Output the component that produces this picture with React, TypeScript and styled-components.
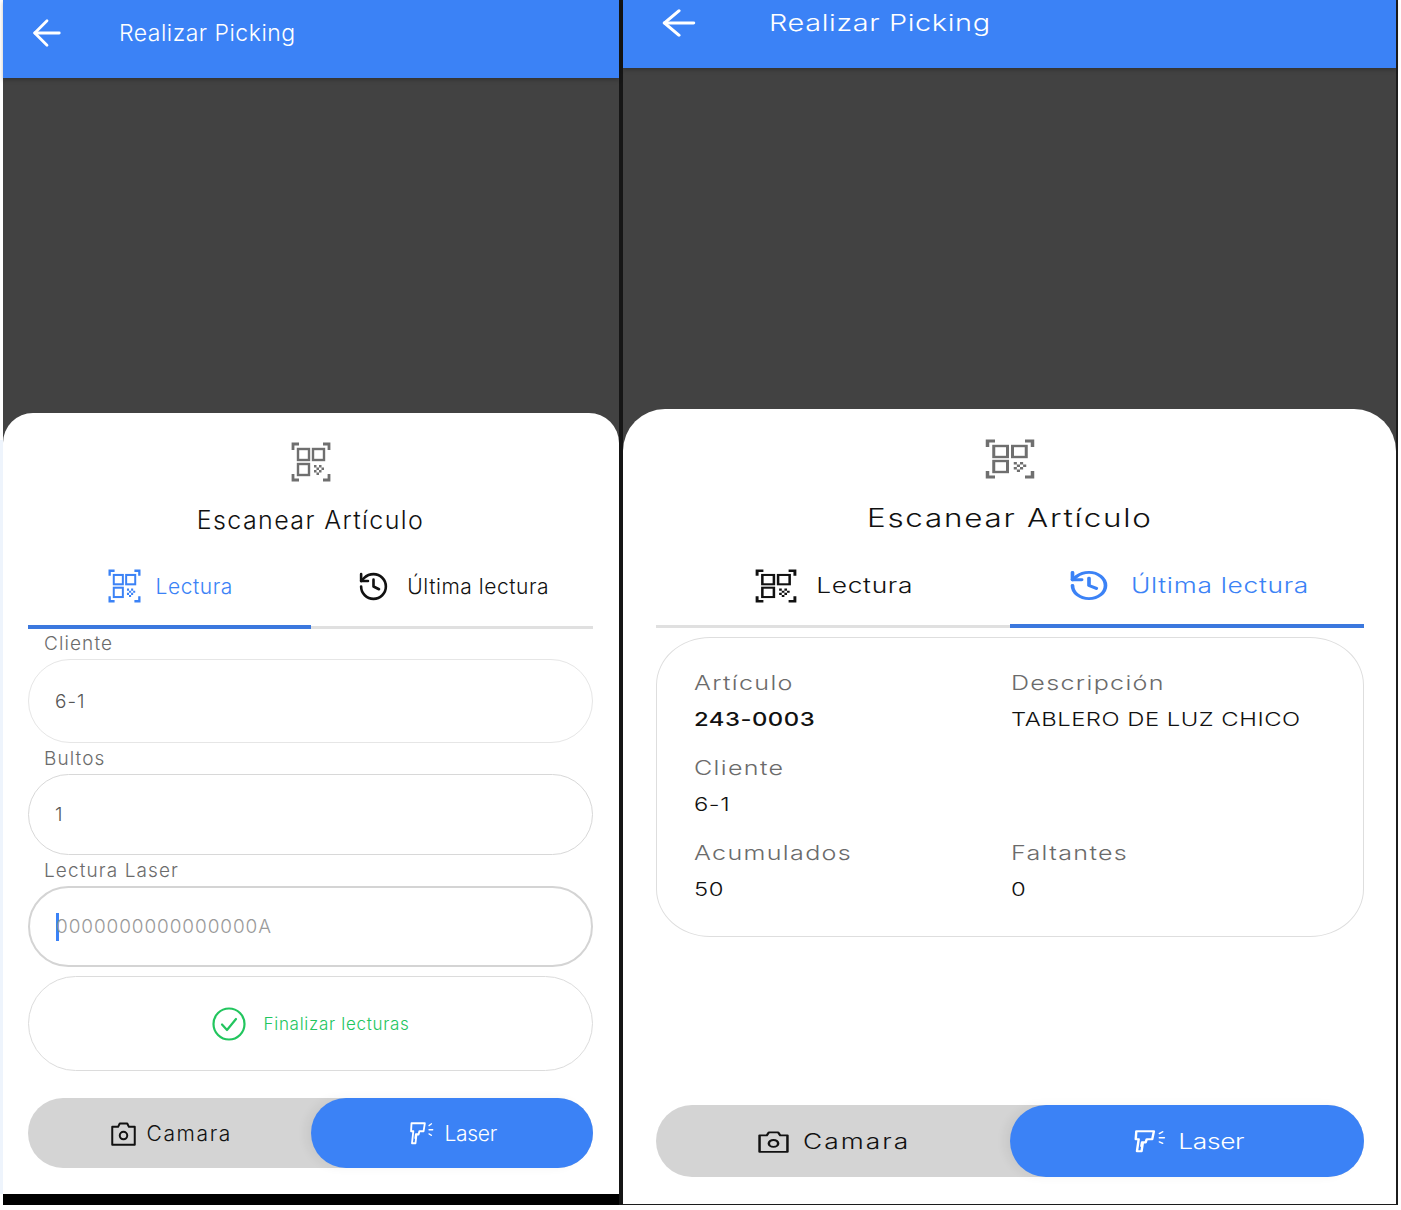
import React from "react";
import styled, { createGlobalStyle, css } from "styled-components";
import { ArrowLeft, History } from "lucide-react";

const Global = createGlobalStyle`
  html, body { margin: 0; padding: 0; background: #fff; }
  body { font-family: "Inter", "Liberation Sans", sans-serif; }
`;

const STRETCH = 1.255;
const stretched = (origin: string) => css`
  display: inline-block;
  transform: scaleX(${STRETCH});
  transform-origin: ${origin} center;
`;

const Page = styled.div`
  width: 1401px;
  height: 1210px;
  display: flex;
  align-items: flex-start;
  background: #fff;
  overflow: hidden;
`;
const LeftEdge = styled.div`
  width: 3px;
  height: 1210px;
  background: linear-gradient(#fff 0 440px, #eef4fc 440px 1194px, #fff 1194px);
`;
const Gutter = styled.div`
  width: 4px;
  height: 1205px;
  background: #161616;
`;
const RightEdge = styled.div`
  width: 2px;
  height: 1205px;
  background: #1c1c1c;
`;
const Screen = styled.section<{ $wide?: boolean }>`
  width: ${(p) => (p.$wide ? 773 : 616)}px;
  height: 1205px;
  display: flex;
  flex-direction: column;
  background: #424242;
`;
const AppBar = styled.header<{ $wide?: boolean }>`
  height: ${(p) => (p.$wide ? 68 : 78)}px;
  flex: none;
  box-sizing: border-box;
  background: #3b82f6;
  color: #fff;
  display: flex;
  align-items: flex-start;
  padding: ${(p) => (p.$wide ? "2px 0 0 31px" : "12px 0 0 23px")};
  box-shadow: 0 2px 4px rgba(0, 0, 0, 0.25);
  position: relative;
  z-index: 1;
`;
const BarTitle = styled.h1<{ $wide?: boolean }>`
  margin: ${(p) => (p.$wide ? "3px 0 0 65px" : "3px 0 0 51px")};
  font-size: 23px;
  line-height: 36px;
  font-weight: 300;
  letter-spacing: 0.5px;
  white-space: nowrap;
  ${(p) => p.$wide && stretched("left")}
`;
const Sheet = styled.div<{ $wide?: boolean }>`
  margin-top: auto;
  height: ${(p) => (p.$wide ? 795 : 781)}px;
  flex: none;
  background: #fff;
  border-radius: ${(p) => (p.$wide ? "42px 42px 0 0" : "30px 30px 0 0")};
  display: flex;
  flex-direction: column;
  padding: ${(p) => (p.$wide ? "30px 32px 27px 33px" : "29px 26px 26px 25px")};
  box-sizing: border-box;
`;
const BottomBar = styled.div<{ $wide?: boolean }>`
  height: ${(p) => (p.$wide ? 1 : 11)}px;
  flex: none;
  background: ${(p) => (p.$wide ? "#1c1c1c" : "#000")};
`;
const Head = styled.div<{ $wide?: boolean }>`
  display: flex;
  flex-direction: column;
  align-items: center;
  color: #6f6f6f;
  height: ${(p) => (p.$wide ? 103 : 105)}px;
  flex: none;
`;
const Title = styled.h2<{ $wide?: boolean }>`
  margin: ${(p) => (p.$wide ? 19 : 18)}px 0 0;
  font-size: 25px;
  line-height: 40px;
  font-weight: 300;
  color: #111;
  letter-spacing: 1.4px;
  white-space: nowrap;
  ${(p) => p.$wide && stretched("center")}
`;
const Tabs = styled.div<{ $wide?: boolean }>`
  display: grid;
  grid-template-columns: 1fr 1fr;
  height: ${(p) => (p.$wide ? 86 : 82)}px;
  flex: none;
`;
const Tab = styled.div<{ $on?: boolean; $gap: number; $nudge?: number; $top?: number }>`
  display: flex;
  align-items: center;
  justify-content: center;
  gap: ${(p) => p.$gap}px;
  padding: ${(p) => p.$top ?? 0}px ${(p) => Math.max(p.$nudge ?? 0, 0)}px 0 ${(p) => Math.max(-(p.$nudge ?? 0), 0)}px;
  box-sizing: border-box;
  color: ${(p) => (p.$on ? "#3b82f6" : "#111")};
  border-bottom: ${(p) => (p.$on ? "4px solid #3b78de" : "3px solid #e0e0e0")};
`;
const TabText = styled.span<{ $wide?: boolean }>`
  font-size: 21px;
  font-weight: 300;
  letter-spacing: 0.55px;
  white-space: nowrap;
  ${(p) => p.$wide && stretched("center")}
`;
const Form = styled.div`
  display: flex;
  flex-direction: column;
  margin-top: -1px;
`;
const FieldLabel = styled.label`
  height: 31px;
  padding-left: 16px;
  font-size: 19px;
  line-height: 31px;
  font-weight: 300;
  color: #6b6b6b;
  letter-spacing: 1.1px;
  display: block;
`;
const Field = styled.div<{ $h: number; $strong?: boolean; $faint?: boolean }>`
  height: ${(p) => p.$h}px;
  box-sizing: border-box;
  border: ${(p) => (p.$strong ? "2px solid #d4d4d4" : `1.5px solid ${p.$faint ? "#e6e6e6" : "#d8d8d8"}`)};
  border-radius: 42px;
  display: flex;
  align-items: center;
  padding-left: 26px;
  font-size: 19px;
  font-weight: 300;
  letter-spacing: 1px;
  color: #555;
`;
const Caret = styled.span`
  width: 3px;
  height: 28px;
  background: #3b82f6;
  flex: none;
  margin-right: -3px;
`;
const Placeholder = styled.span`
  color: #9a9a9a;
  letter-spacing: 0.9px;
`;
const FinishButton = styled.div`
  height: 95px;
  margin-top: 9px;
  box-sizing: border-box;
  border: 1.5px solid #dcdcdc;
  border-radius: 48px;
  display: flex;
  align-items: center;
  justify-content: center;
  gap: 18px;
  color: #22c55e;
  font-size: 17px;
  font-weight: 300;
  letter-spacing: 0.7px;
`;
const Detail = styled.div`
  margin-top: 9px;
  height: 300px;
  box-sizing: border-box;
  border: 1.5px solid #dedede;
  border-radius: 54px / 48px;
  padding: 28px 36px 0 37px;
  display: grid;
  grid-template-columns: 317px 1fr;
  grid-auto-rows: 85px;
`;
const DetailLabel = styled.div`
  font-size: 20px;
  line-height: 34px;
  font-weight: 300;
  color: #6b6b6b;
  letter-spacing: 1.05px;
  white-space: nowrap;
  transform: scaleX(${STRETCH});
  transform-origin: left center;
`;
const DetailValue = styled.div<{ $bold?: boolean }>`
  font-size: 19px;
  line-height: 40px;
  font-weight: ${(p) => (p.$bold ? 500 : 300)};
  color: #111;
  letter-spacing: 0.4px;
  white-space: nowrap;
  transform: scaleX(${STRETCH});
  transform-origin: left center;
`;
const Toggle = styled.div<{ $wide?: boolean }>`
  margin-top: auto;
  height: ${(p) => (p.$wide ? 72 : 70)}px;
  flex: none;
  display: grid;
  grid-template-columns: 1fr 1fr;
  background: #d4d4d4;
  border-radius: 36px;
`;
const ToggleOption = styled.div<{ $on?: boolean; $gap: number; $nudge?: number }>`
  display: flex;
  align-items: center;
  justify-content: center;
  gap: ${(p) => p.$gap}px;
  padding: 0 ${(p) => Math.max(p.$nudge ?? 0, 0)}px 0 ${(p) => Math.max(-(p.$nudge ?? 0), 0)}px;
  border-radius: 36px;
  color: ${(p) => (p.$on ? "#fff" : "#111")};
  background: ${(p) => (p.$on ? "#3b82f6" : "transparent")};
  box-shadow: ${(p) => (p.$on ? "-6px 0 10px rgba(0,0,0,0.05)" : "none")};
`;
const ToggleText = styled.span<{ $wide?: boolean; $ls: number }>`
  font-size: 21px;
  font-weight: 300;
  letter-spacing: ${(p) => p.$ls}px;
  ${(p) => p.$wide && stretched("center")}
`;

const QrIcon = ({ w, h }: { w: number; h: number }) => (
  <svg width={w} height={h} viewBox="0 0 40 40" preserveAspectRatio="none" fill="none" stroke="currentColor" strokeWidth="2.4">
    <path d="M2 8V2h6M32 2h6v6M2 32v6h6M38 32v6h-6" strokeWidth="2.8" />
    <rect x="7" y="7" width="11" height="11" />
    <rect x="22" y="7" width="11" height="11" />
    <rect x="7" y="22" width="11" height="11" />
    <path
      d="M23 23h2.5v2.5H23zM28 23h2.5v2.5H28zM25.5 25.5H28V28h-2.5zM30.5 25.5H33V28h-2.5zM23 28h2.5v2.5H23zM28 28h2.5v2.5H28zM25.5 30.5H28V33h-2.5z"
      fill="currentColor"
      stroke="none"
    />
  </svg>
);
const CameraIcon = ({ w, h }: { w: number; h: number }) => (
  <svg width={w} height={h} viewBox="0 0 30 30" preserveAspectRatio="none" fill="none" stroke="currentColor" strokeWidth="2.4" strokeLinejoin="round">
    <path d="M1.5 7h7l2-4h9l2 4h7v21.5h-27z" />
    <circle cx="15" cy="17.5" r="4.5" />
  </svg>
);
const ScannerIcon = ({ w, h }: { w: number; h: number }) => (
  <svg width={w} height={h} viewBox="0 0 30 26" preserveAspectRatio="none" fill="none" stroke="currentColor" strokeWidth="2.2" strokeLinejoin="round" strokeLinecap="round">
    <path d="M3 2.5h16l-1.5 8.5h-5l-1 3.5H9l-1.2 9.5H3.6L5.2 11H2.5z" />
    <path d="M8.2 14.5l-.6 4" />
    <path d="M24 5l3-2M24 9.5h4.5M24 14l3 1.5" strokeWidth="1.5" />
  </svg>
);
const CheckIcon = () => (
  <svg width={34} height={34} viewBox="0 0 34 34" fill="none" stroke="currentColor" strokeWidth="2.2" strokeLinecap="round" strokeLinejoin="round">
    <circle cx="17" cy="17" r="15.5" />
    <path d="M10 17.5l5 5.5 9-11" />
  </svg>
);

const Shared = ({ wide, active, children }: { wide?: boolean; active: 0 | 1; children: React.ReactNode }) => (
  <Screen $wide={wide}>
    <AppBar $wide={wide}>
      {wide ? (
        <ArrowLeft width={50} height={42} strokeWidth={1.6} preserveAspectRatio="none" />
      ) : (
        <ArrowLeft size={42} strokeWidth={1.6} />
      )}
      <BarTitle $wide={wide}>Realizar Picking</BarTitle>
    </AppBar>
    <Sheet $wide={wide}>
      <Head $wide={wide}>
        <QrIcon w={wide ? 50 : 40} h={40} />
        <Title $wide={wide}>Escanear Artículo</Title>
      </Head>
      <Tabs $wide={wide}>
        <Tab $on={active === 0} $gap={wide ? 29 : 15} $nudge={wide ? 7 : -2} $top={wide ? 4 : 0}>
          <QrIcon w={wide ? 42 : 33} h={34} />
          <TabText $wide={wide}>Lectura</TabText>
        </Tab>
        <Tab $on={active === 1} $gap={wide ? 38 : 17} $nudge={wide ? 16 : -3} $top={wide ? 4 : 0}>
          {wide ? (
            <History width={44} height={35} strokeWidth={2} preserveAspectRatio="none" />
          ) : (
            <History size={33} strokeWidth={1.9} />
          )}
          <TabText $wide={wide}>Última lectura</TabText>
        </Tab>
      </Tabs>
      {children}
      <Toggle $wide={wide}>
        <ToggleOption $gap={wide ? 25 : 11} $nudge={wide ? 8 : -4}>
          <CameraIcon w={wide ? 31 : 25} h={wide ? 23 : 25} />
          <ToggleText $wide={wide} $ls={1.6}>Camara</ToggleText>
        </ToggleOption>
        <ToggleOption $on $gap={wide ? 19 : 11} $nudge={wide ? 4 : -2}>
          <ScannerIcon w={wide ? 33 : 25} h={24} />
          <ToggleText $wide={wide} $ls={-0.3}>Laser</ToggleText>
        </ToggleOption>
      </Toggle>
    </Sheet>
    <BottomBar $wide={wide} />
  </Screen>
);

export default function App() {
  return (
    <Page>
      <Global />
      <LeftEdge />
      <Shared active={0}>
        <Form>
          <FieldLabel>Cliente</FieldLabel>
          <Field $h={84} $faint>6-1</Field>
          <FieldLabel>Bultos</FieldLabel>
          <Field $h={81}>1</Field>
          <FieldLabel>Lectura Laser</FieldLabel>
          <Field $h={81} $strong>
            <Caret />
            <Placeholder>0000000000000000A</Placeholder>
          </Field>
          <FinishButton>
            <CheckIcon />
            Finalizar lecturas
          </FinishButton>
        </Form>
      </Shared>
      <Gutter />
      <Shared wide active={1}>
        <Detail>
          <div>
            <DetailLabel>Artículo</DetailLabel>
            <DetailValue $bold>243-0003</DetailValue>
          </div>
          <div>
            <DetailLabel>Descripción</DetailLabel>
            <DetailValue>TABLERO DE LUZ CHICO</DetailValue>
          </div>
          <div>
            <DetailLabel>Cliente</DetailLabel>
            <DetailValue>6-1</DetailValue>
          </div>
          <div />
          <div>
            <DetailLabel>Acumulados</DetailLabel>
            <DetailValue>50</DetailValue>
          </div>
          <div>
            <DetailLabel>Faltantes</DetailLabel>
            <DetailValue>0</DetailValue>
          </div>
        </Detail>
      </Shared>
      <RightEdge />
    </Page>
  );
}
